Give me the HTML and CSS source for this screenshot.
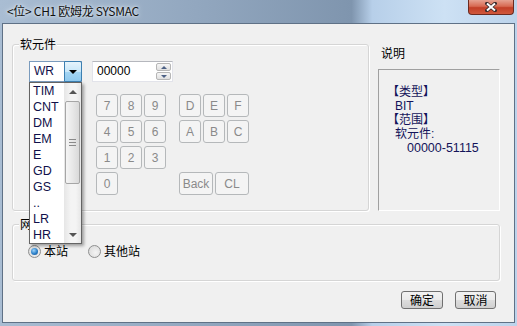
FILE: index.html
```html
<!DOCTYPE html>
<html>
<head>
    <title>&lt;位&gt; CH1 欧姆龙 SYSMAC</title>
    <link rel="stylesheet" href="styles.css">
</head>
<body>
    <div class="window">
        <div class="titlebar">
            <span class="title">&lt;位&gt; CH1 欧姆龙 SYSMAC</span>
            <button class="close" type="button">
                <svg width="12" height="10" viewBox="0 0 12 10">
                    <path d="M2 1.5 L10 8.5 M10 1.5 L2 8.5" stroke="#3a2a2a" stroke-width="3.6" stroke-linecap="square"/>
                    <path d="M2 1.5 L10 8.5 M10 1.5 L2 8.5" stroke="#fff" stroke-width="2"/>
                </svg>
            </button>
        </div>

        <div class="client">
            <div class="top-row">
                <fieldset class="group device">
                    <legend>软元件</legend>
                    <div class="device-body">
                        <div class="inputs">
                            <div class="combo-wrap">
                                <div class="combo">
                                    <span class="combo-text">WR</span>
                                    <span class="combo-btn"><i class="arrow-down"></i></span>
                                </div>
                                <!-- open drop-down list -->
                                <div class="dropdown">
                                    <ul class="options">
                                        <li>TIM</li>
                                        <li>CNT</li>
                                        <li>DM</li>
                                        <li>EM</li>
                                        <li>E</li>
                                        <li>GD</li>
                                        <li>GS</li>
                                        <li>..</li>
                                        <li>LR</li>
                                        <li>HR</li>
                                    </ul>
                                    <div class="scrollbar">
                                        <span class="sb-arrow"><i class="tri-up"></i></span>
                                        <span class="sb-track">
                                            <span class="sb-thumb"><i class="grip"></i></span>
                                        </span>
                                        <span class="sb-arrow"><i class="tri-down"></i></span>
                                    </div>
                                </div>
                            </div>
                            <div class="number">
                                <span class="number-text">00000</span>
                                <span class="spin">
                                    <span class="spin-btn"><i class="spin-up"></i></span>
                                    <span class="spin-btn"><i class="spin-down"></i></span>
                                </span>
                            </div>
                        </div>

                        <div class="keypad">
                            <div class="keys digits">
                                <button type="button" disabled>7</button>
                                <button type="button" disabled>8</button>
                                <button type="button" disabled>9</button>
                                <button type="button" disabled>4</button>
                                <button type="button" disabled>5</button>
                                <button type="button" disabled>6</button>
                                <button type="button" disabled>1</button>
                                <button type="button" disabled>2</button>
                                <button type="button" disabled>3</button>
                                <button type="button" disabled>0</button>
                            </div>
                            <div class="keys hex">
                                <button type="button" disabled>D</button>
                                <button type="button" disabled>E</button>
                                <button type="button" disabled>F</button>
                                <button type="button" disabled>A</button>
                                <button type="button" disabled>B</button>
                                <button type="button" disabled>C</button>
                                <div class="edit-keys">
                                    <button type="button" disabled>Back</button>
                                    <button type="button" disabled>CL</button>
                                </div>
                            </div>
                        </div>
                    </div>
                </fieldset>

                <div class="info">
                    <div class="info-title">说明</div>
                    <div class="info-box">
                        <div class="line">【类型】</div>
                        <div class="line sub">BIT</div>
                        <div class="line">【范围】</div>
                        <div class="line sub">软元件:</div>
                        <div class="line range">00000-51115</div>
                    </div>
                </div>
            </div>

            <fieldset class="group network">
                <legend>网络</legend>
                <div class="radios">
                    <label class="radio"><span class="dot checked"></span>本站</label>
                    <label class="radio"><span class="dot"></span>其他站</label>
                </div>
            </fieldset>

            <div class="actions">
                <button type="button" class="btn">确定</button>
                <button type="button" class="btn">取消</button>
            </div>
        </div>
    </div>
</body>
</html>
```

FILE: styles.css
```css
body {
    margin: 0;
    font-family: "Liberation Sans", "Noto Sans CJK SC", sans-serif;
    font-size: 12px;
    color: #000;
    background: #c4d9ee;
}
.window {
    width: 517px;
    height: 326px;
    display: flex;
    flex-direction: column;
    overflow: hidden;
    background: linear-gradient(to right, #a9bdd3 0%, #92a7bf 38%, #7f95ae 68%, #b7cfe9 72%, #cde1f4 86%, #bcd3eb 100%);
}

/* title bar */
.titlebar {
    height: 23px;
    display: flex;
    align-items: flex-start;
    flex-shrink: 0;
}
.title {
    padding-left: 7px;
    line-height: 22px;
    font-family: "Noto Sans CJK SC", sans-serif;
    font-size: 12px;
    letter-spacing: -0.3px;
    color: #111;
    text-shadow: 0 0 6px #e8f0f8, 0 0 3px #e8f0f8;
}
.close {
    margin-left: auto;
    margin-right: 3px;
    width: 46px;
    height: 15px;
    padding: 0;
    border: 1px solid #6b2a20;
    border-top: none;
    border-radius: 0 0 4px 4px;
    background: linear-gradient(#e6a291 0%, #d76a52 45%, #c23f27 55%, #d0583c 100%);
    display: flex;
    align-items: center;
    justify-content: center;
}

/* client area */
.client {
    flex: 1;
    margin: 0 2px 3px 2px;
    border: 1px solid #5f7186;
    background: #f0f0f0;
    padding: 13px 0 0 9px;
    display: flex;
    flex-direction: column;
}
.top-row {
    display: flex;
    gap: 9px;
}
.group {
    margin: 0;
    padding: 0;
    box-sizing: border-box;
    border: 1px solid #d5d5d5;
    border-radius: 3px;
    box-shadow: inset 1px 1px 0 #fff, 1px 1px 0 #fff;
}
.group legend {
    margin-left: 6px;
    padding: 0 1px;
    font-family: "Noto Sans CJK SC", sans-serif;
    line-height: 14px;
    background: #f0f0f0;
}
.device {
    width: 357px;
    height: 174px;
}
.device-body {
    padding: 10px 0 0 16px;
}

/* combo + number field */
.inputs {
    display: flex;
    gap: 10px;
}
.combo-wrap {
    position: relative;
}
.combo {
    width: 53px;
    height: 21px;
    box-sizing: border-box;
    border: 1px solid #7a9bbd;
    background: #fff;
    display: flex;
}
.combo-text {
    flex: 1;
    padding-left: 4px;
    line-height: 19px;
    color: #10104a;
}
.combo-btn {
    width: 16px;
    margin: -1px -1px -1px 0;
    border: 1px solid #3c7fb1;
    border-radius: 0 2px 2px 0;
    background: linear-gradient(#e6f4fc 0%, #c8e7f9 50%, #a4d5f3 51%, #8fc9ee 100%);
    display: flex;
    align-items: center;
    justify-content: center;
}
.arrow-down {
    width: 0;
    height: 0;
    border-left: 4px solid transparent;
    border-right: 4px solid transparent;
    border-top: 4px solid #000;
}
.number {
    width: 81px;
    height: 21px;
    box-sizing: border-box;
    border: 1px solid #e2e3ea;
    border-top-color: #b5b7bd;
    background: #fff;
    display: flex;
}
.number-text {
    flex: 1;
    padding-left: 4px;
    line-height: 19px;
}
.spin {
    width: 15px;
    display: flex;
    flex-direction: column;
    gap: 1px;
    padding: 1px 1px 1px 0;
}
.spin-btn {
    flex: 1;
    border: 1px solid #b6b6b6;
    border-radius: 2px;
    background: linear-gradient(#f6f6f6, #e0e0e0);
    display: flex;
    align-items: center;
    justify-content: center;
}
.spin-up,
.spin-down {
    width: 0;
    height: 0;
    border-left: 3px solid transparent;
    border-right: 3px solid transparent;
}
.spin-up {
    border-bottom: 3px solid #4d6185;
}
.spin-down {
    border-top: 3px solid #4d6185;
}

/* drop-down list */
.dropdown {
    position: absolute;
    top: 21px;
    left: 0;
    width: 53px;
    height: 162px;
    box-sizing: border-box;
    border: 1px solid #646464;
    background: #fff;
    box-shadow: 2px 2px 3px rgba(0, 0, 0, 0.35);
    display: flex;
    z-index: 5;
}
.options {
    flex: 1;
    margin: 0;
    padding: 0;
    list-style: none;
}
.options li {
    height: 16px;
    line-height: 17px;
    padding-left: 3px;
    font-size: 12.5px;
    color: #10104a;
}
.scrollbar {
    width: 17px;
    display: flex;
    flex-direction: column;
    background: linear-gradient(to right, #e6e6e6, #f4f4f4 40%, #f4f4f4 70%, #e6e6e6);
}
.sb-arrow {
    height: 17px;
    display: flex;
    align-items: center;
    justify-content: center;
}
.tri-up,
.tri-down {
    width: 0;
    height: 0;
    border-left: 4px solid transparent;
    border-right: 4px solid transparent;
}
.tri-up {
    border-bottom: 4px solid #555;
}
.tri-down {
    border-top: 4px solid #555;
}
.sb-track {
    flex: 1;
    padding: 1px 0;
}
.sb-thumb {
    display: flex;
    align-items: center;
    justify-content: center;
    height: 81px;
    margin: 0 1px;
    border: 1px solid #a6a6a6;
    border-radius: 2px;
    background: linear-gradient(to right, #f5f5f5, #e8e8e8 50%, #d9d9d9);
}
.grip {
    width: 7px;
    height: 5px;
    border-top: 1px solid #8a8a8a;
    border-bottom: 1px solid #8a8a8a;
    background: linear-gradient(transparent 2px, #8a8a8a 2px, #8a8a8a 3px, transparent 3px);
}

/* keypad */
.keypad {
    display: flex;
    gap: 13px;
    margin: 12px 0 0 67px;
}
.keys {
    display: grid;
    grid-template-columns: repeat(3, 22px);
    grid-auto-rows: 23px;
    gap: 3px 2px;
}
.keys button {
    padding: 0;
    font-family: "Liberation Sans", sans-serif;
    font-size: 12px;
    color: #8a8a8a;
    background: #f4f4f4;
    border: 1px solid #b5b8ba;
    border-radius: 3px;
}
.edit-keys {
    grid-column: 1 / -1;
    grid-row: 4;
    display: flex;
    gap: 2px;
}
.edit-keys button {
    flex: 1;
}

/* description */
.info {
    margin-top: 9px;
}
.info-title {
    padding-left: 3px;
    font-family: "Noto Sans CJK SC", sans-serif;
    line-height: 14px;
}
.info-box {
    margin-top: 9px;
    width: 122px;
    height: 142px;
    box-sizing: border-box;
    border: 1px solid #fff;
    border-top-color: #a0a0a0;
    border-left-color: #a0a0a0;
    padding: 15px 0 0 8px;
    font-family: "Liberation Sans", "Noto Sans CJK SC", sans-serif;
    color: #14145a;
}
.info-box .line {
    line-height: 14px;
}
.info-box .sub {
    padding-left: 8px;
}
.info-box .range {
    padding-left: 20px;
    font-size: 12.5px;
}

/* network */
.network {
    margin-top: 6px;
    width: 488px;
    height: 64px;
}
.radios {
    display: flex;
    gap: 20px;
    padding: 13px 0 0 15px;
    font-family: "Noto Sans CJK SC", sans-serif;
}
.radio {
    display: flex;
    align-items: center;
    gap: 3px;
    line-height: 14px;
}
.dot {
    width: 13px;
    height: 13px;
    box-sizing: border-box;
    border: 1px solid #8e8f8f;
    border-radius: 50%;
    background: radial-gradient(circle at 60% 60%, #f4f4f4, #d6d6d6);
    display: flex;
    align-items: center;
    justify-content: center;
}
.dot.checked::after {
    content: "";
    width: 7px;
    height: 7px;
    border-radius: 50%;
    background: radial-gradient(circle at 40% 35%, #9fd4fb, #2a7fc8 55%, #1a4f8a);
}

/* dialog buttons */
.actions {
    display: flex;
    justify-content: flex-end;
    gap: 12px;
    margin-top: 10px;
    padding-right: 18px;
}
.btn {
    width: 42px;
    height: 18px;
    padding: 0;
    font-family: "Noto Sans CJK SC", sans-serif;
    font-size: 12px;
    line-height: 14px;
    color: #000;
    border: 1px solid #707070;
    border-radius: 3px;
    background: linear-gradient(#f2f2f2 0%, #ebebeb 50%, #dddddd 51%, #cfcfcf 100%);
}
.btn + .btn {
    width: 41px;
}
```
